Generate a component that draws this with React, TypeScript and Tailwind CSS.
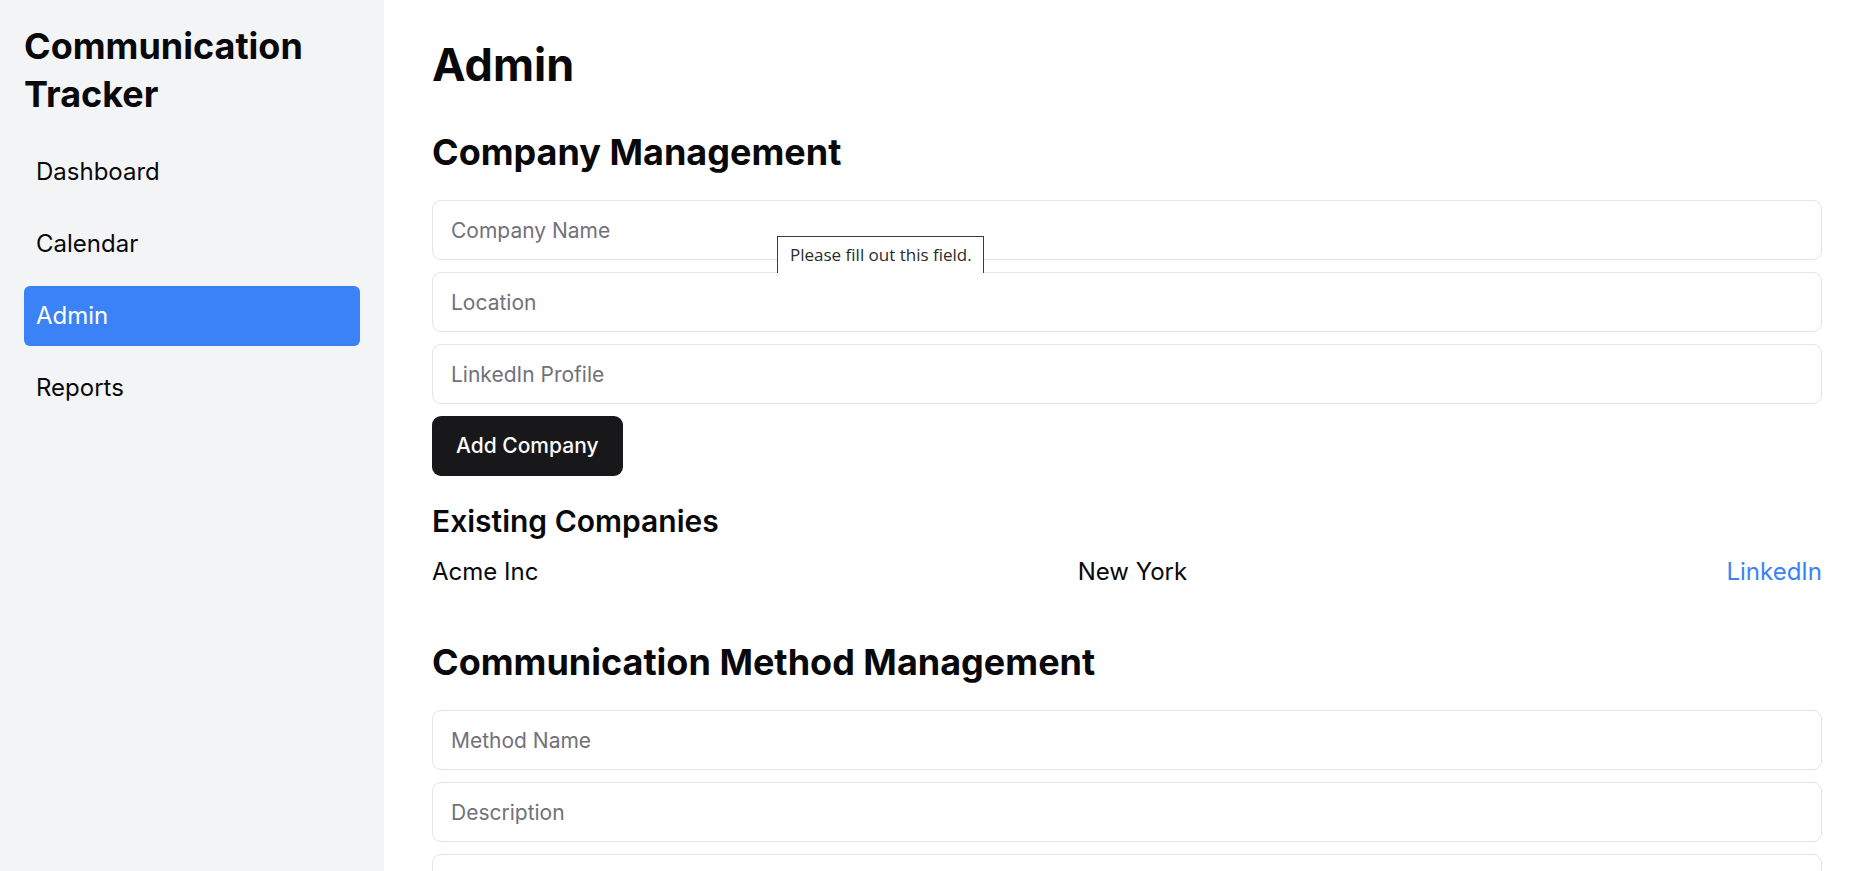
import React from "react";

const navItems = ["Dashboard", "Calendar", "Admin", "Reports"];

function Field({ placeholder }: { placeholder?: string }) {
  return (
    <input
      type="text"
      placeholder={placeholder}
      className="w-full h-[60px] rounded-[9px] border border-[#e4e4e7] bg-white px-[18px] text-[21px] text-[#09090b] placeholder:text-[#71717a] outline-none"
    />
  );
}

export default function App() {
  return (
    <div className="flex h-screen w-full overflow-hidden bg-white font-['Inter','Noto_Sans',sans-serif] text-[#09090b]">
      <aside className="w-[384px] shrink-0 bg-[#f3f4f6] px-[24px] pt-[22px]">
        <h1 className="mb-[24px] text-[36px] font-bold leading-[48px]">
          Communication Tracker
        </h1>
        <nav className="flex flex-col gap-[12px]">
          {navItems.map((item) => (
            <a
              key={item}
              className={
                item === "Admin"
                  ? "flex h-[60px] items-center rounded-[6px] bg-[#3b82f6] px-[12px] text-[24px] leading-[36px] text-white"
                  : "flex h-[60px] items-center rounded-[6px] px-[12px] text-[24px] leading-[36px] text-[#09090b]"
              }
            >
              {item}
            </a>
          ))}
        </nav>
      </aside>

      <main className="flex-1 overflow-hidden pl-[48px] pr-[43px] pt-[38px]">
        <h1 className="mb-[36px] text-[45px] font-bold leading-[54px]">Admin</h1>

        <section>
          <h2 className="mb-[24px] text-[36px] font-bold leading-[48px]">
            Company Management
          </h2>
          <div className="flex flex-col items-start gap-[12px]">
            <div className="relative w-full">
              <Field placeholder="Company Name" />
              <div className="absolute left-[345px] top-[36px] z-10 h-[37px] w-[207px] overflow-hidden whitespace-nowrap border border-b-0 border-[#3c3c3c] bg-white px-[12px] pt-[7px] font-['Open_Sans','Noto_Sans',sans-serif] text-[17px] leading-[22px] text-[#2b2b2b]">
                Please fill out this field.
              </div>
            </div>
            <Field placeholder="Location" />
            <Field placeholder="LinkedIn Profile" />
            <button className="h-[60px] rounded-[9px] bg-[#18181b] px-[24px] text-[21px] font-medium text-[#fafafa]">
              Add Company
            </button>
          </div>

          <h3 className="mb-[12px] mt-[24px] text-[30px] font-semibold leading-[42px]">
            Existing Companies
          </h3>
          <div className="flex items-center justify-between text-[24px] leading-[36px]">
            <span>Acme Inc</span>
            <span>New York</span>
            <a className="text-[#3b82f6]">LinkedIn</a>
          </div>
        </section>

        <section className="mt-[48px]">
          <h2 className="mb-[24px] text-[36px] font-bold leading-[48px]">
            Communication Method Management
          </h2>
          <div className="flex flex-col items-start gap-[12px]">
            <Field placeholder="Method Name" />
            <Field placeholder="Description" />
            <Field />
          </div>
        </section>
      </main>
    </div>
  );
}
